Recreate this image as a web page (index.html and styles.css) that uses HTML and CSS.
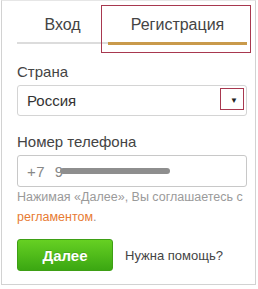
FILE: index.html
```html
<!DOCTYPE html>
<html>
<head>
<meta charset="utf-8">
<link rel="stylesheet" href="styles.css">
</head>
<body>
<div class="frame">
  <div class="tabs">
    <div class="tab tab-login">Вход</div>
    <div class="tab tab-reg">Регистрация</div>
    <div class="mark mark-tab"></div>
  </div>
  <div class="label label-country">Страна</div>
  <div class="select">
    <span>Россия</span>
    <span class="arrow">▼</span>
    <div class="mark mark-arrow"></div>
  </div>
  <div class="label label-phone">Номер телефона</div>
  <div class="input">
    <span class="prefix">+7 9</span>
    <span class="smear"></span>
  </div>
  <div class="terms">Нажимая «Далее», Вы соглашаетесь с<br><a class="link">регламентом</a>.</div>
  <div class="actions">
    <button class="btn">Далее</button>
    <span class="help">Нужна помощь?</span>
  </div>
</div>
</body>
</html>
```
FILE: styles.css
```css
html, body { margin: 0; padding: 0; background: #fff; }
body { font-family: "Liberation Sans", Arial, sans-serif; color: #444; }
.frame {
  position: relative;
  margin-left: 1px;
  width: 255px;
  height: 285px;
  border: 1px solid #d2d2d2;
  border-top-color: #e6e6e6;
  box-sizing: border-box;
  padding: 0 0 0 15px;
}
.tabs {
  display: flex;
  width: 230px;
  height: 44px;
  position: relative;
}
.tab {
  display: flex;
  align-items: center;
  justify-content: center;
  font-size: 16px;
  color: #444;
  box-sizing: border-box;
  padding-top: 6px;
}
.tab-login { width: 91px; border-bottom: 2px solid #dcdcdc; height: 43px; }
.tab-reg { width: 139px; border-bottom: 3px solid #c99a4b; height: 44px; }
.mark { position: absolute; border: 1px solid #a8384f; box-sizing: border-box; }
.mark-tab { left: 84px; top: 4px; width: 150px; height: 48px; }
.label { font-size: 15px; color: #444; line-height: 17px; }
.label-country { margin-top: 18px; }
.select {
  position: relative;
  margin-top: 5px;
  width: 230px;
  height: 31px;
  border: 1px solid #d4d4d4;
  border-radius: 3px;
  box-sizing: border-box;
  display: flex;
  align-items: center;
  justify-content: space-between;
  padding: 0 8px 0 9px;
  font-size: 15px;
  color: #333;
}
.arrow { font-size: 8px; color: #222; }
.mark-arrow { left: 202px; top: 2px; width: 24px; height: 22px; }
.label-phone { margin-top: 17px; }
.input {
  margin-top: 5px;
  width: 230px;
  height: 32px;
  border: 1px solid #c8c8c8;
  border-radius: 3px;
  box-sizing: border-box;
  display: flex;
  align-items: center;
  padding-left: 9px;
  font-size: 15px;
  color: #888;
}
.prefix { letter-spacing: 0.5px; word-spacing: 5px; }
.smear {
  display: block;
  width: 110px;
  height: 6px;
  margin-left: -4px;
  background: #8e8e8e;
  border-radius: 3px;
  filter: blur(0.6px);
}
.terms {
  width: 236px;
  font-size: 12.5px;
  line-height: 20px;
  color: #9a9a9a;
  white-space: nowrap;
}
.link { color: #e77b33; text-decoration: none; }
.actions {
  margin-top: 12px;
  display: flex;
  align-items: center;
  gap: 12px;
}
.btn {
  width: 96px;
  height: 32px;
  border: 1px solid #3e9f15;
  border-radius: 3px;
  background: linear-gradient(#66d023, #3ba712);
  color: #fff;
  font-family: "Liberation Sans", Arial, sans-serif;
  font-weight: bold;
  font-size: 15px;
  text-shadow: 0 -1px 0 rgba(0,0,0,0.15);
  padding: 0;
}
.help { font-size: 13px; color: #444; }
```
